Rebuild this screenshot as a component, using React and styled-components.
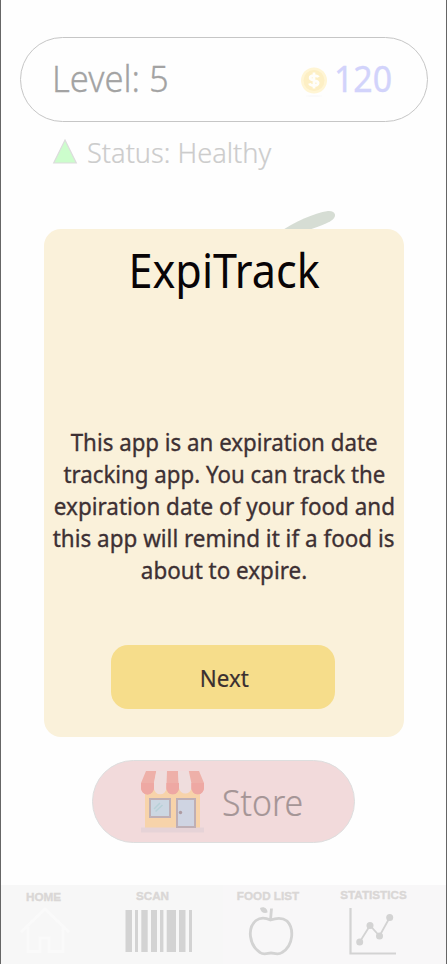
import React from "react";
import styled, { createGlobalStyle } from "styled-components";

const GlobalStyle = createGlobalStyle`
  * { box-sizing: border-box; }
  body { margin: 0; background: #fefefe; }
`;

const Screen = styled.main`
  position: relative;
  display: flex;
  flex-direction: column;
  width: 447px;
  height: 964px;
  overflow: hidden;
  background: #fefefe;
  border-left: 1px solid #666;
  border-right: 1px solid #666;
  font-family: "Noto Sans", "Open Sans", sans-serif;
`;

const Label = styled.span`
  display: block;
  flex: none;
  font-size: ${(p) => p.$size}px;
  font-weight: ${(p) => p.$weight || 300};
  line-height: ${(p) => p.$line || 48}px;
  color: ${(p) => p.$color};
  -webkit-text-stroke: ${(p) => p.$stroke || 0}px ${(p) => p.$color};
  white-space: nowrap;
  transform: scaleX(${(p) => p.$stretch});
  transform-origin: ${(p) => p.$origin || "left"} center;
`;

const LevelBar = styled.header`
  display: flex;
  align-items: center;
  justify-content: space-between;
  height: 85px;
  margin: 37px 18px 0 19px;
  padding: 0 31px 2px 31px;
  border: 1px solid #c6c6c6;
  border-radius: 43px;
`;

const Coins = styled.div`
  display: flex;
  align-items: center;
  gap: 6px;
`;

const CoinIcon = styled.svg`
  display: block;
  width: 28px;
  height: 32px;
  margin-top: 4px;
`;

const StatusRow = styled.section`
  display: flex;
  align-items: center;
  gap: 9px;
  height: 34px;
  margin: 14px 0 0 51px;
`;

const Triangle = styled.svg`
  display: block;
  width: 26px;
  height: 27px;
  margin-bottom: 4px;
`;

const PetArea = styled.section`
  flex: 1;
  padding: 38px 0 0 277px;
`;

const Leaf = styled.svg`
  display: block;
  width: 60px;
  height: 40px;
`;

const StoreButton = styled.button`
  display: flex;
  align-items: center;
  gap: 17px;
  width: 263px;
  height: 83px;
  margin: 0 0 42px 91px;
  padding: 2px 0 0 48px;
  border: 1px solid #dddede;
  border-radius: 42px;
  background: #f2dadb;
  font-family: inherit;
`;

const StoreIcon = styled.svg`
  display: block;
  flex: none;
  width: 64px;
  height: 64px;
  margin-bottom: 2px;
`;

const NavBar = styled.nav`
  display: grid;
  grid-template-columns: 100px 117px 112px 116px;
  height: 79px;
  background: linear-gradient(90deg, #f7f7f7 50%, #f8f7f8 50%);
`;

const NavItem = styled.a`
  display: flex;
  flex-direction: column;
  align-items: center;
  padding-top: ${(p) => p.$top}px;
  padding-right: ${(p) => p.$right}px;
`;

const NavLabel = styled.span`
  font: 700 11.7px/14px "Liberation Sans", Arial, sans-serif;
  color: #dad7d6;
  -webkit-text-stroke: 0.4px #dad7d6;
  white-space: nowrap;
`;

const NavIcon = styled.svg`
  display: block;
  flex: none;
  width: ${(p) => p.$w}px;
  height: ${(p) => p.$h}px;
  margin-top: ${(p) => p.$gap}px;
  margin-left: ${(p) => p.$shift || 0}px;
`;

const Dialog = styled.section`
  position: absolute;
  top: 229px;
  left: 43px;
  display: flex;
  flex-direction: column;
  align-items: center;
  width: 360px;
  height: 508px;
  padding-top: 10px;
  border-radius: 17px;
  background: #faf1da;
`;

const Message = styled.div`
  display: flex;
  flex-direction: column;
  align-items: center;
  margin-top: 125px;
`;

const NextButton = styled.button`
  display: flex;
  flex: none;
  align-items: center;
  justify-content: center;
  width: 224px;
  height: 64px;
  margin: 59px 2px 0 0;
  padding: 2px 0 0 3px;
  border: 0;
  border-radius: 17px;
  background: #f6dd8b;
  font-family: inherit;
`;

const lines = [
  ["This app is an expiration date", 0.929],
  ["tracking app. You can track the", 0.928],
  ["expiration date of your food and", 0.935],
  ["this app will remind it if a food is", 0.936],
  ["about to expire.", 0.934],
];

const bars = [
  [125.5, 6.5], [135, 3], [141.3, 6.4], [151, 6], [160, 3.4], [166.7, 9.3], [179, 6.5], [189, 3],
];

const awning = [
  ["M5 1H15.5L13 14V18A6.5 6.5 0 0 1 0 18V13Z", "#eeb0a9"],
  ["M15.2 1H26.2L25.5 18A6.3 6.3 0 0 1 12.9 18V13Z", "#efdddd"],
  ["M26 1H37L38 18A6.3 6.3 0 0 1 25.4 18Z", "#eeb0a9"],
  ["M37 1H48L50.5 13V18A6.3 6.3 0 0 1 38 18Z", "#efdddd"],
  ["M47.8 1H58L63 13V18A6.3 6.3 0 0 1 50.4 18V13Z", "#eeb0a9"],
];

export default function App() {
  return (
    <>
      <GlobalStyle />
      <Screen>
        <LevelBar>
          <Label $size={36} $stretch={0.96} $stroke={0.3} $color="#a3a3a3">Level: 5</Label>
          <Coins>
            <CoinIcon viewBox="0 0 28 32">
              <ellipse cx="14" cy="31" rx="8" ry="1" fill="#fafafa" />
              <circle cx="14" cy="15.5" r="13" fill="#fff5d4" />
              <circle cx="14" cy="15.5" r="10.5" fill="#fdefc4" />
              <path
                d="M18.4 12.3C17.6 10.2 10.1 9.7 10.1 12.9C10.1 16.1 18.2 14.5 18.2 18.1C18.2 21.5 10.3 21.1 9.5 18.3M14 7.5V23.5"
                fill="none"
                stroke="#fffefa"
                strokeWidth="2.7"
              />
            </CoinIcon>
            <Label $size={36} $weight={400} $stretch={0.94} $stroke={0.4} $color="#d2d3fb">120</Label>
          </Coins>
        </LevelBar>

        <StatusRow>
          <Triangle viewBox="0 0 26 27">
            <path d="M13 2L24.3 25H1.7Z" fill="#ccfdcc" stroke="#dcdcdc" strokeWidth="1.2" />
          </Triangle>
          <Label $size={27.5} $line={34} $stretch={0.988} $stroke={0.2} $color="#cccccc">Status: Healthy</Label>
        </StatusRow>

        <PetArea>
          <Leaf viewBox="0 0 60 40">
            <path
              d="M2 24C16 14 36 5 50 3C58 2.5 60 9 52 13.5C43 18 30 23 8 27Z"
              fill="#d6ddd4"
            />
          </Leaf>
        </PetArea>

        <StoreButton>
          <StoreIcon viewBox="0 0 64 64">
            <path d="M4 18H59V58H4Z" fill="#f7d3aa" />
            <path d="M0 57.5H63V62.5H0Z" fill="#e6d3d7" />
            <path d="M9 29H29V47H9Z" fill="#ccd7e2" stroke="#bfafb5" strokeWidth="2" />
            <path d="M13 39L19 33M14.5 41.5L21.5 35" stroke="#b7d1d7" strokeWidth="1.5" />
            <path d="M36 29H54V57H36Z" fill="#cfd4e2" stroke="#bfafb5" strokeWidth="2" />
            <circle cx="39.5" cy="42.5" r="1.7" fill="#ad9ba2" />
            {awning.map(([d, fill]) => <path key={d} d={d} fill={fill} />)}
            <path d="M0 13H13V18A6.5 6.5 0 0 1 0 18ZM25.4 13H38V18A6.3 6.3 0 0 1 25.4 18ZM50.4 13H63V18A6.3 6.3 0 0 1 50.4 18Z" fill="#eea8a3" />
          </StoreIcon>
          <Label $size={36} $stretch={0.94} $stroke={0.2} $color="#a59596">Store</Label>
        </StoreButton>

        <NavBar>
          <NavItem $top={5} $right={15}>
            <NavLabel>HOME</NavLabel>
            <NavIcon viewBox="20 906 50 47" $w={50} $h={47} $gap={2} $shift={3}>
              <path
                d="M21 932L45 909L69 932M28 927V951.5H40V938H49V951.5H63V927"
                fill="none"
                stroke="#fafafa"
                strokeWidth="3"
              />
            </NavIcon>
          </NavItem>
          <NavItem $top={4} $right={14}>
            <NavLabel>SCAN</NavLabel>
            <NavIcon viewBox="125 909 68 44" $w={68} $h={44} $gap={6} $shift={13}>
              {bars.map(([x, w]) => (
                <rect key={x} x={x} y="910" width={w} height="42" fill="#d3d3d3" />
              ))}
            </NavIcon>
          </NavItem>
          <NavItem $top={4} $right={12}>
            <NavLabel>FOOD LIST</NavLabel>
            <NavIcon viewBox="247 905 48 54" $w={48} $h={54} $gap={2} $shift={5}>
              <path
                d="M270.5 920C265 917.5 260 917.5 256 920.5C247 928 249 945 260 952.5C264 955.5 268 953 271 953C274 953 278 955.5 282 952.5C294 945 294 928 287 921C282 917 276 918 270.5 920ZM270.5 920L271.5 908.5"
                fill="none"
                stroke="#d3d3d3"
                strokeWidth="2.8"
              />
              <path d="M260 908C264 906 267.5 908.5 267.5 912.5C264 914 260.5 912 260 908Z" fill="#d3d3d3" />
            </NavIcon>
          </NavItem>
          <NavItem $top={3} $right={29}>
            <NavLabel>STATISTICS</NavLabel>
            <NavIcon viewBox="348 907 50 49" $w={50} $h={49} $gap={5} $shift={-1}>
              <path d="M350.5 908V953.5H396" fill="none" stroke="#d3d3d3" strokeWidth="2.2" />
              <path d="M359.7 942L370 925.5L379.5 936L389.7 917.5" fill="none" stroke="#d3d3d3" strokeWidth="1.8" />
              <circle cx="359.7" cy="942" r="3.5" fill="#d3d3d3" />
              <circle cx="370" cy="925.5" r="3.5" fill="#d3d3d3" />
              <circle cx="379.5" cy="936" r="3.5" fill="#d3d3d3" />
              <circle cx="389.7" cy="917.5" r="3.5" fill="#d3d3d3" />
            </NavIcon>
          </NavItem>
        </NavBar>

        <Dialog>
          <Label $size={47} $weight={400} $line={62} $stretch={0.918} $origin="center" $color="#080406">
            ExpiTrack
          </Label>
          <Message>
            {lines.map(([text, stretch]) => (
              <Label key={text} $size={24} $weight={400} $stroke={0.35} $line={32} $stretch={stretch} $origin="center" $color="#3d3033">
                {text}
              </Label>
            ))}
          </Message>
          <NextButton>
            <Label $size={24} $weight={400} $line={32} $stretch={0.93} $stroke={0.2} $origin="center" $color="#3a2f30">Next</Label>
          </NextButton>
        </Dialog>
      </Screen>
    </>
  );
}
